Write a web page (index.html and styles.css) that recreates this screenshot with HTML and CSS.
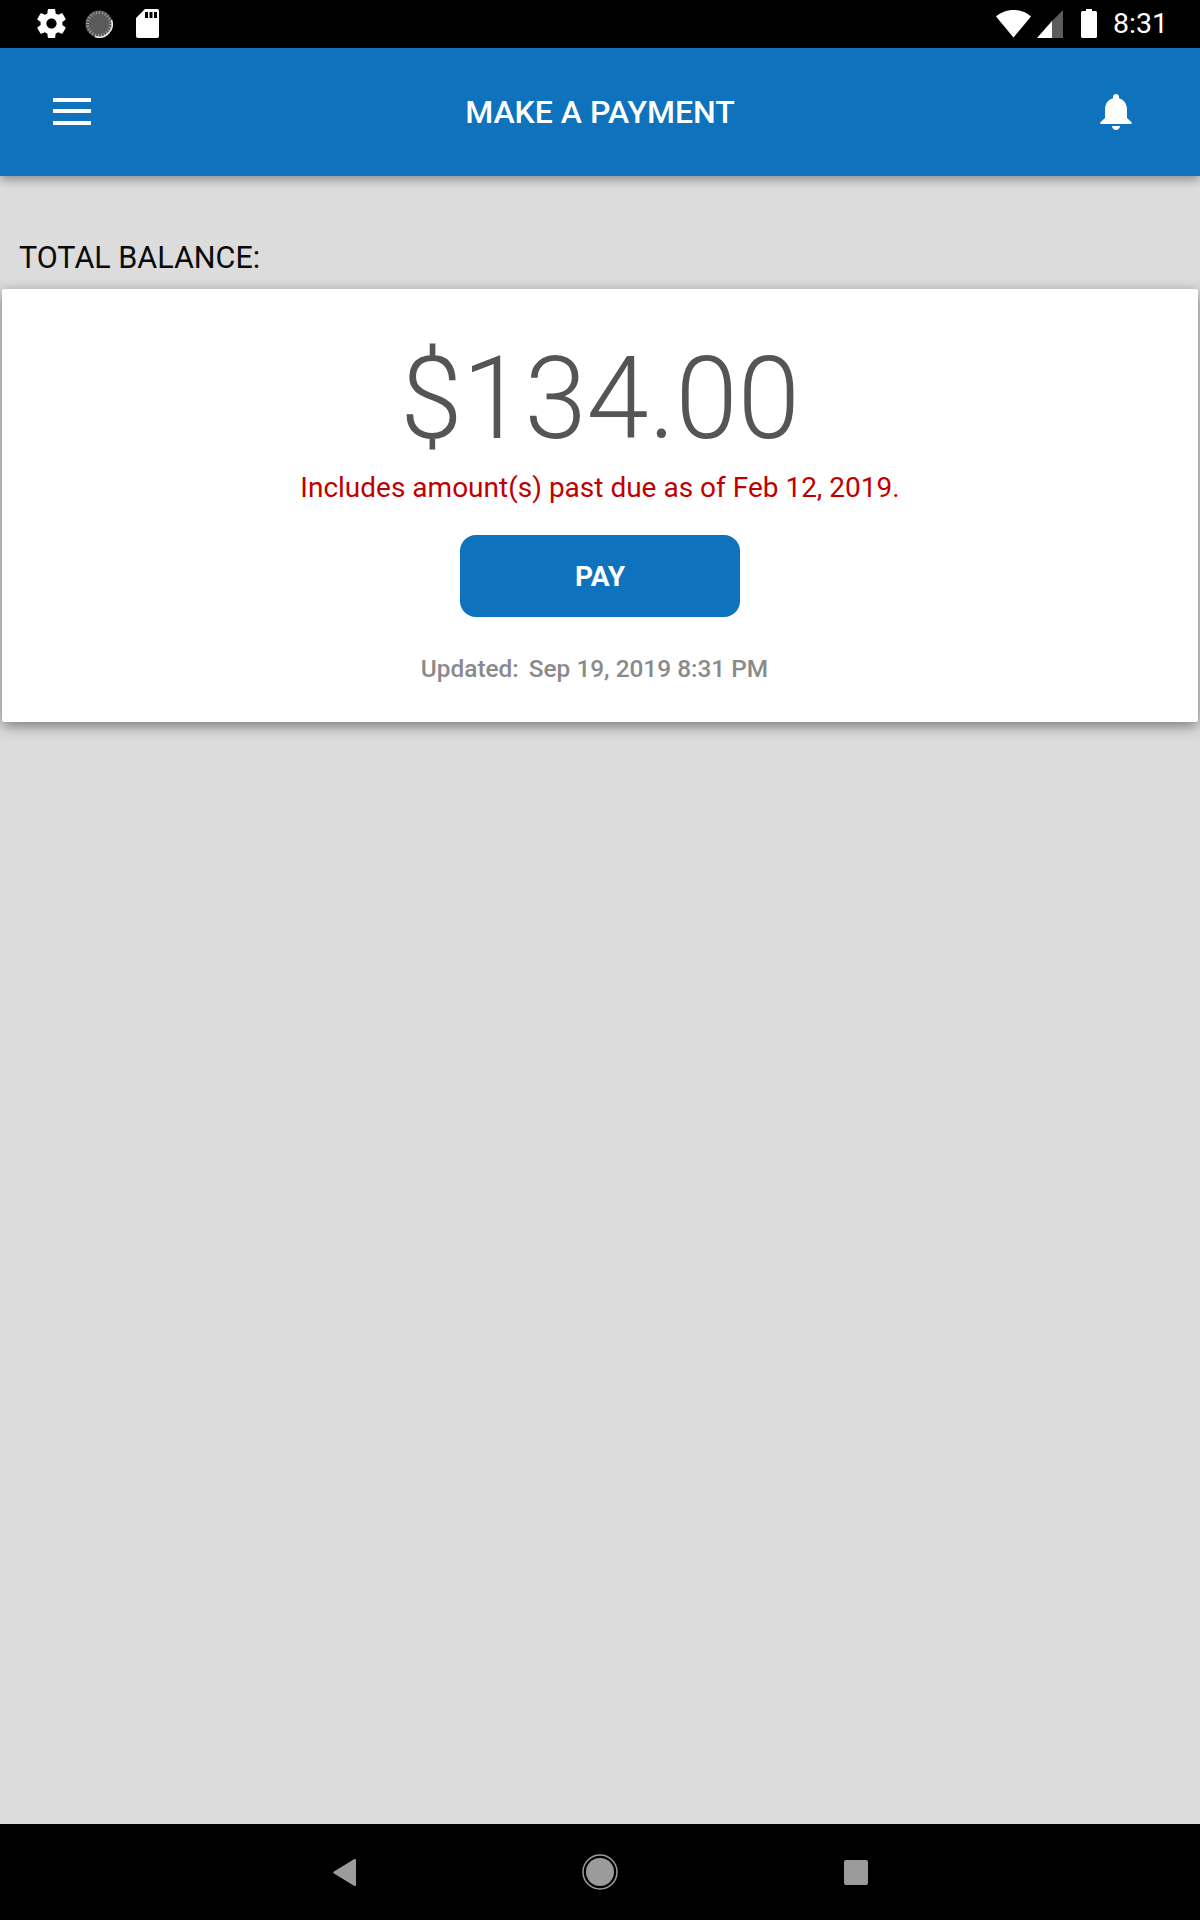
FILE: index.html
```html
<!DOCTYPE html>
<html lang="en">
<head>
<meta charset="utf-8">
<title>Make a Payment</title>
<link rel="stylesheet" href="styles.css">
</head>
<body>
<div class="screen">
  <header class="status-bar">
    <div class="status-group status-left">
      <svg class="ic-gear" viewBox="0 0 24 24"><path fill="#fff" d="M19.43 12.98c.04-.32.07-.64.07-.98s-.03-.66-.07-.98l2.11-1.65c.19-.15.24-.42.12-.64l-2-3.46c-.12-.22-.39-.3-.61-.22l-2.49 1c-.52-.4-1.08-.73-1.69-.98l-.38-2.65C14.46 2.18 14.25 2 14 2h-4c-.25 0-.46.18-.49.42l-.38 2.65c-.61.25-1.17.59-1.69.98l-2.49-1c-.23-.09-.49 0-.61.22l-2 3.46c-.13.22-.07.49.12.64l2.11 1.65c-.04.32-.07.65-.07.98s.03.66.07.98l-2.11 1.65c-.19.15-.24.42-.12.64l2 3.46c.12.22.39.3.61.22l2.49-1c.52.4 1.08.73 1.69.98l.38 2.65c.03.24.24.42.49.42h4c.25 0 .46-.18.49-.42l.38-2.65c.61-.25 1.17-.59 1.69-.98l2.49 1c.23.09.49 0 .61-.22l2-3.46c.12-.22.07-.49-.12-.64l-2.11-1.65zM12 15.5c-1.93 0-3.5-1.57-3.5-3.5s1.57-3.5 3.5-3.5 3.5 1.57 3.5 3.5-1.57 3.500-3.500 3.500z"/></svg>
      <svg class="ic-sync" viewBox="0 0 28 28"><circle cx="14" cy="14" r="13.500" fill="#5a5a5a"/><circle cx="14" cy="14" r="11.500" fill="none" stroke="#a0a0a0" stroke-width="3" stroke-dasharray="1 2"/><circle cx="14" cy="14" r="9" fill="#5a5a5a"/><path d="M26.500 10A13 13 0 0 1 10 26.500" fill="none" stroke="#e8e8e8" stroke-width="1.600"/></svg>
      <svg class="ic-sd" viewBox="0 0 23 29"><path fill="#fff" d="M9 0h12a2 2 0 0 1 2 2v25a2 2 0 0 1-2 2H2a2 2 0 0 1-2-2V9z"/><path fill="#000" d="M9 3h3v6H9zM13.500 3h3v6h-3zM18 3h3v6h-3z"/></svg>
    </div>
    <div class="status-group status-right">
      <svg class="ic-wifi" viewBox="0 0 35 28"><path fill="#fff" d="M17.500 27.500 0 6.500C4.500 2.600 10.700 0 17.500 0S30.500 2.600 35 6.500z"/></svg>
      <svg class="ic-signal" viewBox="0 0 26 28"><path fill="#5c5c5c" d="M26 0v28H15V11z"/><path fill="#fff" d="M15 11v17H0z"/></svg>
      <svg class="ic-battery" viewBox="0 0 16 29"><path fill="#fff" d="M5 0h6v2h3.500a1.500 1.500 0 0 1 1.500 1.500V27.500a1.500 1.500 0 0 1-1.500 1.500H1.500A1.500 1.500 0 0 1 0 27.500V3.500A1.500 1.500 0 0 1 1.500 2H5z"/></svg>
      <span class="clock">8:31</span>
    </div>
  </header>

  <div class="app-bar">
    <button class="menu-btn" aria-label="Menu"><span></span><span></span><span></span></button>
    <h1 class="app-title">MAKE A PAYMENT</h1>
    <svg class="ic-bell" viewBox="0 0 32 36"><path fill="#fff" d="M16 0c1.700 0 3 1.300 3 3v1.200C24.200 5.500 27 10 27 15.500V24l4.500 4.200c.5.500.5 1.800-.5 1.800H1c-1 0-1-1.300-.5-1.800L5 24v-8.500C5 10 7.800 5.500 13 4.200V3c0-1.700 1.300-3 3-3z"/><path fill="#fff" d="M12 32h8c0 2-1.800 4-4 4s-4-2-4-4z"/></svg>
  </div>

  <main class="content">
    <h2 class="section-label">TOTAL BALANCE:</h2>
    <section class="card">
      <div class="amount">$134.00</div>
      <p class="past-due">Includes amount(s) past due as of Feb 12, 2019.</p>
      <button class="pay-btn">PAY</button>
      <p class="updated"><span class="updated-label">Updated:</span><span>Sep 19, 2019 8:31 PM</span></p>
    </section>
  </main>

  <footer class="nav-bar">
    <svg class="ic-back" viewBox="0 0 23 27"><path fill="#9b9b9b" d="M21 .3c1-.6 2 0 2 1v24.400c0 1-1 1.600-2 1L1 14.500c-1-.6-1-1.400 0-2z"/></svg>
    <svg class="ic-home" viewBox="0 0 36 36"><circle cx="18" cy="18" r="17" fill="none" stroke="#9b9b9b" stroke-width="1.500"/><circle cx="18" cy="18" r="14" fill="#9b9b9b"/></svg>
    <span class="ic-recent"></span>
  </footer>
</div>
</body>
</html>
```

FILE: styles.css
```css
* { box-sizing: border-box; }
html, body { margin: 0; padding: 0; }
body { width: 1200px; height: 1920px; overflow: hidden; font-family: Roboto, "Liberation Sans", sans-serif; background: #dcdcdc; }
.screen { width: 1200px; height: 1920px; display: flex; flex-direction: column; }

.status-bar { height: 48px; background: #000; display: flex; justify-content: space-between; align-items: center; padding: 0 32px 0 34px; flex: none; }
.status-group { display: flex; align-items: center; }
.ic-gear { width: 35px; height: 35px; margin-top: -1px; }
.ic-sync { width: 28px; height: 28px; margin-left: 16px; margin-top: -1px; }
.ic-sd { width: 23px; height: 29px; margin-left: 23px; margin-top: -1px; }
.ic-wifi { width: 35px; height: 28px; margin-top: -1px; }
.ic-signal { width: 26px; height: 28px; margin-left: 6px; margin-top: -1px; }
.ic-battery { width: 16px; height: 29px; margin-left: 18px; margin-top: -1px; }
.clock { color: #fff; font-size: 28.500px; line-height: 48px; margin-left: 16px; }

.app-bar { height: 128px; background: #0e72bc; display: grid; grid-template-columns: 1fr auto 1fr; align-items: center; padding: 0 68px 0 53px; flex: none; box-shadow: 0 3px 10px rgba(0,0,0,.4); position: relative; z-index: 1; }
.menu-btn { width: 38px; height: 27px; padding: 0; border: 0; background: none; display: flex; flex-direction: column; justify-content: space-between; margin-top: -2px; }
.menu-btn span { display: block; height: 4px; background: #fff; }
.app-title { margin: 0 0 0 15px; font-size: 32px; font-weight: 500; color: #fff; line-height: 40px; }
.ic-bell { width: 32px; height: 36px; justify-self: end; }

.content { flex: 1; padding-top: 62px; }
.section-label { margin: 0; padding-left: 19px; font-size: 30.500px; font-weight: 400; line-height: 40px; color: #0a0a0a; height: 51px; }
.card { margin: 0 2px; height: 433px; background: #fff; box-shadow: 0 4px 14px rgba(0,0,0,.45); display: flex; flex-direction: column; align-items: center; border-radius: 2px; }
.amount { font-size: 112px; font-weight: 300; line-height: 120px; color: #555; margin-top: 50px; transform: scaleY(1.03); }
.past-due { margin: 11px 0 0; font-size: 28px; line-height: 36px; color: #c00000; }
.pay-btn { margin-top: 29px; width: 280px; height: 82px; padding-top: 2px; border: 0; border-radius: 16px; background: #0e72bc; color: #fff; font-family: inherit; font-size: 28px; font-weight: 700; }
.updated { margin: 36px 11px 0 0; font-size: 24.400px; font-weight: 500; line-height: 32px; color: #8a8a8a; display: flex; gap: 10px; }

.nav-bar { height: 96px; background: #000; flex: none; display: flex; align-items: center; justify-content: center; position: relative; }
.ic-back { width: 23px; height: 27px; margin-right: 226px; }
.ic-home { width: 36px; height: 36px; margin-right: 226px; }
.ic-recent { display: block; width: 24px; height: 25px; background: #9b9b9b; border-radius: 2px; }
```
